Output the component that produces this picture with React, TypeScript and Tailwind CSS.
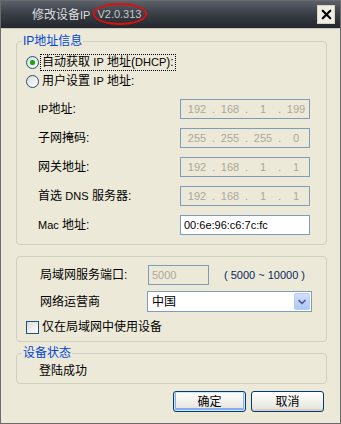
import { X, ChevronDown } from 'lucide-react';

const FONT = "font-['Tahoma','Liberation_Sans','Noto_Sans_CJK_SC',sans-serif]";

const L = ({ children }: { children: React.ReactNode }) => <span className="text-[11px]">{children}</span>;

const IpBox = ({ parts }: { parts: string[] }) => (
  <div className="w-[130px] h-[20px] border border-[#7f9db9] bg-[#ece9d8] flex items-center pl-[4px] text-[11px] text-[#aca899]">
    {parts.map((p, i) => (
      <div key={i} className="flex items-center">
        <span className="w-[24px] text-center">{p}</span>
        {i < 3 && <span className="w-[9px] text-center">.</span>}
      </div>
    ))}
  </div>
);

const Row = ({ label, children }: { label: React.ReactNode; children: React.ReactNode }) => (
  <div className="h-[20px] flex items-center">
    <div className="w-[163px] pl-[21px] text-[12px] text-black">{label}</div>
    {children}
  </div>
);

const Radio = ({ checked }: { checked?: boolean }) => (
  <div className="w-[13px] h-[13px] rounded-full border border-[#1c5180] bg-gradient-to-br from-[#dcdcd7] to-white flex items-center justify-center">
    {checked && <div className="w-[5px] h-[5px] rounded-full bg-[#21a121] shadow-[0_0_1px_#6fd36f]" />}
  </div>
);

export default function App() {
  return (
    <div className={`w-[341px] h-[424px] flex flex-col bg-[#ece9d8] border border-[#6b6b6b] overflow-hidden ${FONT}`}>
      {/* Title bar */}
      <div className="h-[28px] shrink-0 flex items-center bg-gradient-to-b from-[#5a6069] via-[#393e45] to-[#23272c] border-b border-[#c9c7bb]">
        <span className="ml-[31px] text-[12px] text-[#dedede]">
          修改设备<span className="text-[11px]">IP</span>
        </span>
        <span className="relative ml-[7px] text-[11px] text-[#c8c8c8]">
          V2.0.313
          {/* red marker ellipse drawn over the version */}
          <span className="absolute -left-[4px] -right-[6px] -top-[3px] -bottom-[2px] rounded-[50%] border-2 border-[#e01010]" />
        </span>
        <button className="ml-auto mr-[5px] w-[18px] h-[19px] bg-[#f0efe4] border border-[#d7d4c5] flex items-center justify-center">
          <X size={15} strokeWidth={3.5} className="text-black" />
        </button>
      </div>

      {/* Body */}
      <div className="flex-1 flex flex-col px-[15px] pt-[5px]">
        <fieldset className="w-[311px] border border-[#d0d0bf] rounded-[4px] p-0 m-0 pb-[9px]">
          <legend className="ml-[5px] px-[1px] text-[12px] leading-[14px] text-[#0046d5]">IP地址信息</legend>
          <div className="flex flex-col">
            <div className="h-[18px] mt-[5px] flex items-center pl-[9px]">
              <Radio checked />
              <span className="ml-[1px] px-[1px] border border-dotted border-black text-[12px] leading-[15px] text-black">
                自动获取 <L>IP</L> 地址(<L>DHCP</L>):
              </span>
            </div>
            <div className="h-[18px] mt-[1px] flex items-center pl-[9px]">
              <Radio />
              <span className="ml-[3px] text-[12px] text-black">
                用户设置 <L>IP</L> 地址:
              </span>
            </div>
            <div className="flex flex-col gap-[9px] mt-[9px]">
              <Row label={<><L>IP</L>地址:</>}>
                <IpBox parts={['192', '168', '1', '199']} />
              </Row>
              <Row label="子网掩码:">
                <IpBox parts={['255', '255', '255', '0']} />
              </Row>
              <Row label="网关地址:">
                <IpBox parts={['192', '168', '1', '1']} />
              </Row>
              <Row label={<>首选 <L>DNS</L> 服务器:</>}>
                <IpBox parts={['192', '168', '1', '1']} />
              </Row>
              <Row label={<><L>Mac</L> 地址:</>}>
                <div className="w-[130px] h-[20px] border border-[#7f9db9] bg-white flex items-center pl-[3px] text-[11px] text-black">
                  00:6e:96:c6:7c:fc
                </div>
              </Row>
            </div>
          </div>
        </fieldset>

        <div className="w-[311px] mt-[11px] border border-[#d0d0bf] rounded-[4px] pt-[8px] pb-[6px] flex flex-col">
          <div className="h-[20px] flex items-center">
            <div className="w-[131px] pl-[23px] text-[12px] text-black">局域网服务端口:</div>
            <div className="w-[61px] h-[20px] border border-[#7f9db9] bg-[#ece9d8] flex items-center pl-[3px] text-[11px] text-[#aca899]">
              5000
            </div>
            <span className="ml-[15px] text-[11px] text-[#0b1f5c]">( 5000 ~ 10000 )</span>
          </div>
          <div className="h-[21px] mt-[6px] flex items-center">
            <div className="w-[130px] pl-[23px] text-[12px] text-black">网络运营商</div>
            <div className="w-[165px] h-[21px] border border-[#7f9db9] bg-white flex items-center pl-[4px] pr-[1px] text-[12px] text-black">
              <span className="flex-1">中国</span>
              <div className="w-[16px] h-[17px] rounded-[2px] border border-[#bacdf5] bg-gradient-to-b from-[#d2defc] to-[#b0c6f6] flex items-center justify-center">
                <ChevronDown size={12} strokeWidth={3.5} className="text-[#4d6185]" />
              </div>
            </div>
          </div>
          <div className="h-[16px] mt-[7px] flex items-center pl-[9px]">
            <div className="w-[13px] h-[13px] border border-[#1c5180] bg-gradient-to-br from-[#dcdcd7] to-white" />
            <span className="ml-[3px] text-[12px] text-black">仅在局域网中使用设备</span>
          </div>
        </div>

        <fieldset className="w-[311px] mt-[4px] border border-[#d0d0bf] rounded-[4px] p-0 m-0 pb-[3px]">
          <legend className="ml-[5px] px-[1px] text-[12px] leading-[14px] text-[#0046d5]">设备状态</legend>
          <div className="pl-[22px] mt-[2px] text-[12px] text-black">登陆成功</div>
        </fieldset>

        <div className="flex justify-end gap-[5px] mt-[7px] pr-[1px]">
          <button className="w-[73px] h-[21px] rounded-[3px] border border-[#003c74] bg-gradient-to-b from-white to-[#e3e2d8] shadow-[inset_0_0_0_1px_#cee7ff,inset_0_-1px_0_2px_#89adec] text-[12px] text-black">
            确定
          </button>
          <button className="w-[73px] h-[21px] rounded-[3px] border border-[#003c74] bg-gradient-to-b from-white to-[#e3e2d8] shadow-[inset_0_-2px_0_#d6d0c5] text-[12px] text-black">
            取消
          </button>
        </div>
      </div>
    </div>
  );
}
